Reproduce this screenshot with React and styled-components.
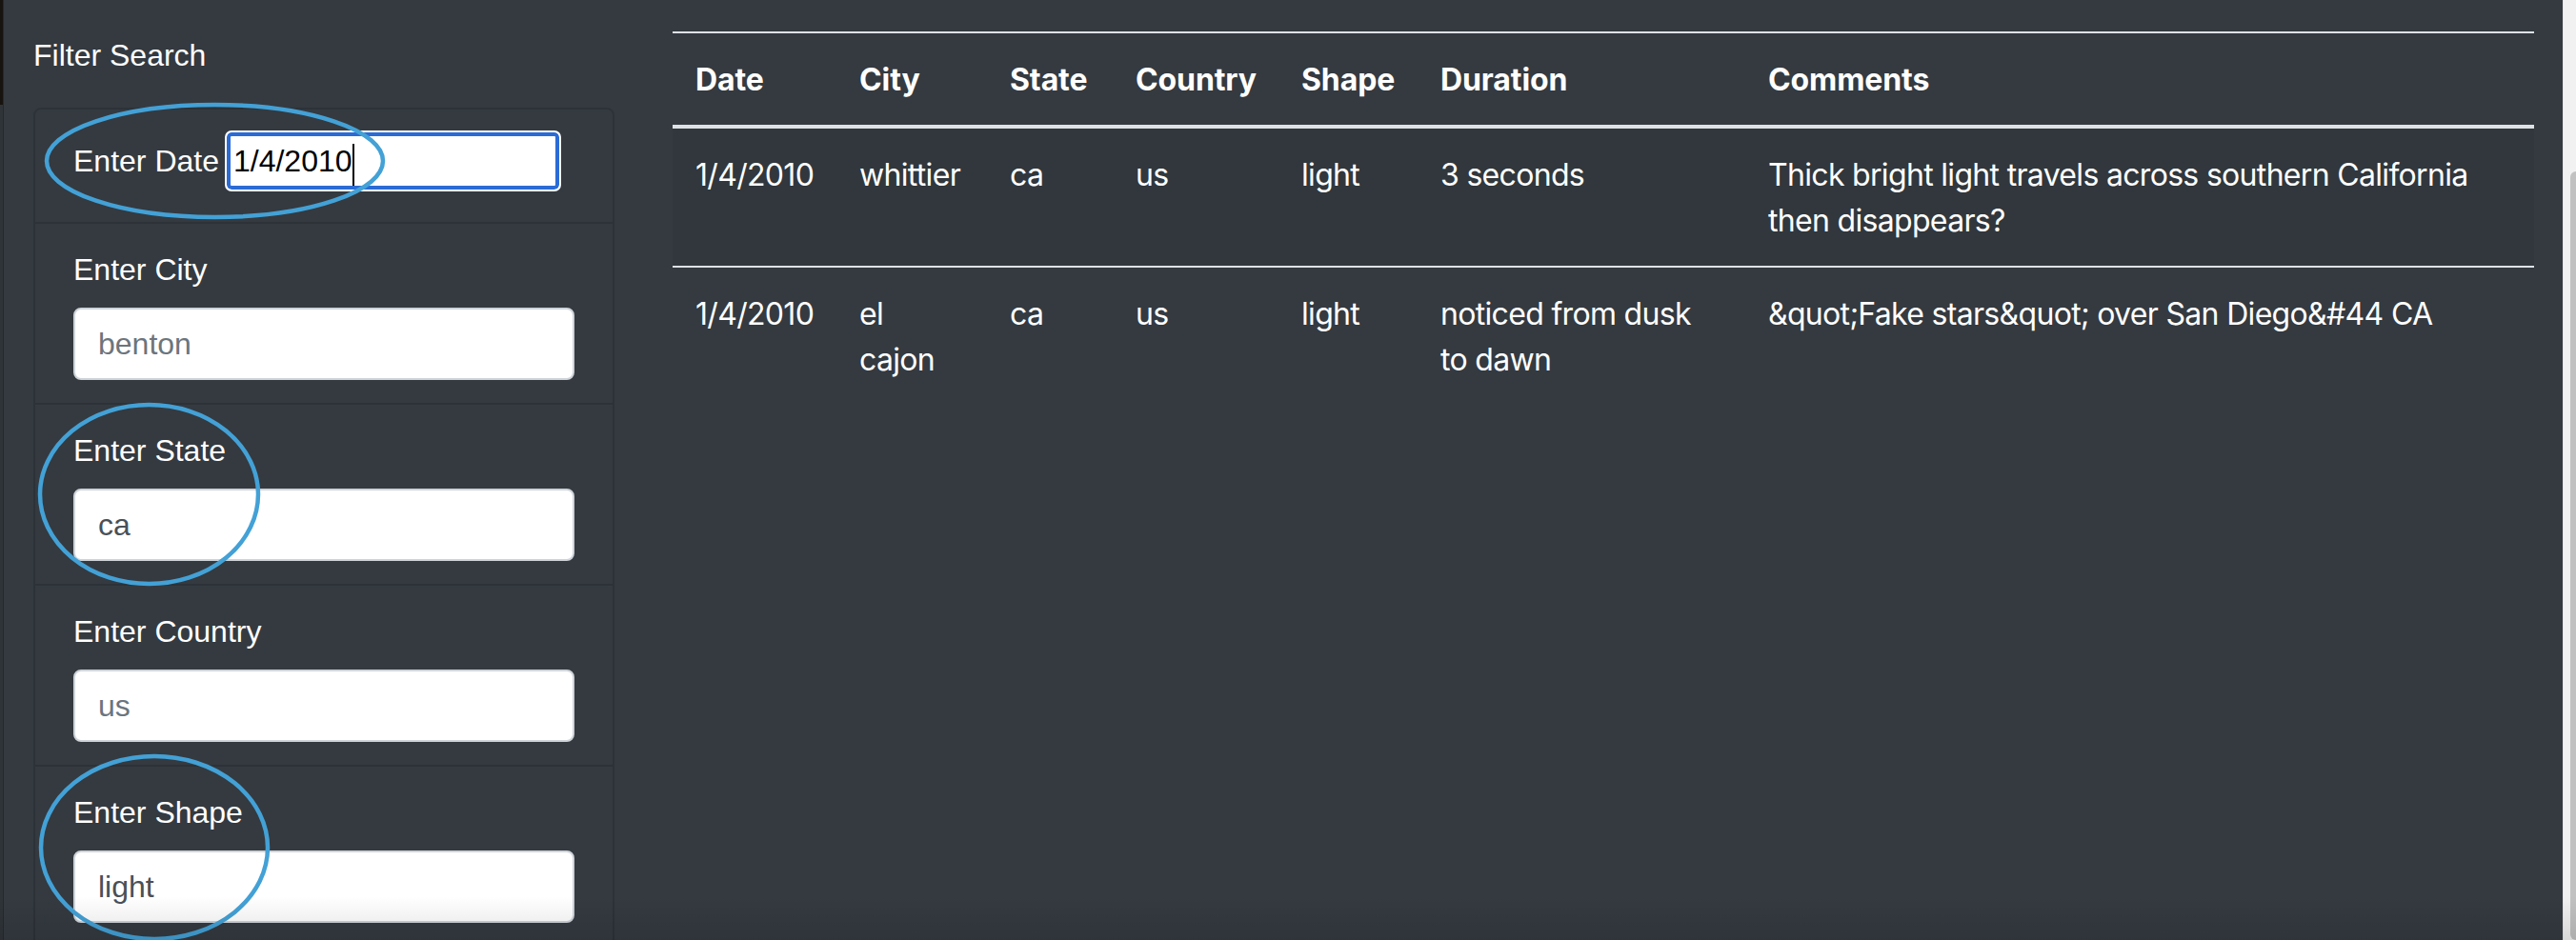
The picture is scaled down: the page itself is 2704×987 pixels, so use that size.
import React from "react";
import styled, { createGlobalStyle, css } from "styled-components";

const GlobalStyle = createGlobalStyle`
  html, body { margin: 0; padding: 0; background: #343a40; overflow: hidden; }
  #root { height: 100vh; }
  *, *::before, *::after { box-sizing: border-box; }
`;

const Window = styled.div`
  position: relative;
  display: flex;
  height: 987px;
  overflow: hidden;
  background: #343a40;
  color: #fff;
`;

const LeftEdge = styled.div`
  width: 4px;
  flex: none;
  display: flex;
  flex-direction: column;
  background: #2f3439;
  border-right: 1px solid #25292d;
`;

const EdgeTop = styled.div`
  height: 110px;
  background: #17130f;
`;

const Main = styled.main`
  flex: 1;
  min-width: 0;
  display: flex;
  align-items: flex-start;
  padding: 0 30px 0 31px;
`;

const Sidebar = styled.aside`
  width: 610px;
  flex: none;
  padding-top: 34px;
  font-family: "Liberation Sans", Arial, sans-serif;
`;

const SidebarTitle = styled.h2`
  margin: 0 0 31px;
  font-size: 32px;
  line-height: 48px;
  font-weight: 400;
  color: #fff;
`;

const FilterList = styled.ul`
  list-style: none;
  margin: 0;
  padding: 0;
  border: 2px solid rgba(0, 0, 0, 0.125);
  border-radius: 8px;
`;

const FilterItem = styled.li`
  padding: 24px 40px;
  & + & {
    border-top: 2px solid rgba(0, 0, 0, 0.125);
  }
  ${(p) =>
    p.$inline &&
    css`
      display: flex;
      align-items: center;
      padding: 22px 40px 32px;
    `}
`;

const FieldLabel = styled.label`
  display: block;
  margin: 0 0 16px;
  font-size: 32px;
  line-height: 48px;
  color: #fff;
  ${(p) =>
    p.$inline &&
    css`
      display: inline-block;
      margin: 0 6px 0 0;
    `}
`;

const TextInput = styled.input`
  display: block;
  width: 100%;
  height: 76px;
  margin: 0;
  padding: 12px 24px;
  font: 400 32px/48px "Liberation Sans", Arial, sans-serif;
  color: #495057;
  background: #fff;
  border: 2px solid #ced4da;
  border-radius: 8px;
  outline: none;
  &::placeholder {
    color: #6c757d;
    opacity: 1;
  }
`;

const DateBox = styled.span`
  position: relative;
  display: inline-flex;
`;

const DateInput = styled.input`
  width: 353px;
  height: 64px;
  margin: 0;
  padding: 0 0 0 7px;
  border: 2px solid #fff;
  border-radius: 7px;
  box-shadow: inset 0 0 0 4px #2b6bd5;
  background: #fff;
  color: #000;
  font: 400 32px "Liberation Sans", Arial, sans-serif;
  outline: none;
`;

const Caret = styled.span`
  position: absolute;
  left: 134px;
  top: 14px;
  width: 2px;
  height: 44px;
  background: #000;
`;

const TableArea = styled.section`
  flex: 1;
  min-width: 0;
  margin-left: 61px;
  padding-top: 33px;
`;

const Table = styled.table`
  width: 100%;
  table-layout: fixed;
  border-collapse: separate;
  border-spacing: 0;
  font-family: Inter, "Liberation Sans", Arial, sans-serif;
  font-size: 32px;
  line-height: 48px;
  color: #fff;
`;

const Th = styled.th`
  width: ${(p) => p.$w || "auto"};
  text-align: left;
  font-weight: 700;
  padding: 25px 24px 23px;
  vertical-align: bottom;
  letter-spacing: -0.1px;
  border-top: 2px solid #dee2e6;
  border-bottom: 4px solid #dee2e6;
`;

const Tr = styled.tr`
  background: ${(p) => (p.$striped ? "rgba(0, 0, 0, 0.05)" : "transparent")};
`;

const Td = styled.td`
  padding: 25px 24px 23px;
  vertical-align: top;
  font-weight: 400;
  letter-spacing: -0.68px;
  border-top: ${(p) => (p.$first ? "none" : "2px solid #dee2e6")};
`;

const ScrollTrack = styled.div`
  width: 14px;
  flex: none;
  display: flex;
  flex-direction: column;
  padding: 180px 0 0 7px;
  background: #f1f1f1;
  border-left: 1px solid #e4e4e4;
`;

const ScrollThumb = styled.div`
  flex: 1;
  background: #c1c1c1;
  border-radius: 6px 0 0 6px;
`;

const Annotations = styled.svg`
  position: absolute;
  inset: 0;
  width: 100%;
  height: 100%;
  pointer-events: none;
`;

const BottomShade = styled.div`
  position: absolute;
  left: 0;
  right: 0;
  bottom: 0;
  height: 46px;
  background: linear-gradient(to bottom, rgba(0, 0, 0, 0), rgba(0, 0, 0, 0.1));
  pointer-events: none;
`;

const columns = [
  { key: "date", label: "Date", w: "172px" },
  { key: "city", label: "City", w: "158px" },
  { key: "state", label: "State", w: "132px" },
  { key: "country", label: "Country", w: "174px" },
  { key: "shape", label: "Shape", w: "146px" },
  { key: "duration", label: "Duration", w: "344px" },
  { key: "comments", label: "Comments" },
];

const rows = [
  {
    date: "1/4/2010",
    city: "whittier",
    state: "ca",
    country: "us",
    shape: "light",
    duration: "3 seconds",
    comments: "Thick bright light travels across southern California then disappears?",
  },
  {
    date: "1/4/2010",
    city: "el cajon",
    state: "ca",
    country: "us",
    shape: "light",
    duration: "noticed from dusk to dawn",
    comments: "&quot;Fake stars&quot; over San Diego&#44 CA",
  },
];

const fields = [
  { id: "city", label: "Enter City", placeholder: "benton" },
  { id: "state", label: "Enter State", value: "ca" },
  { id: "country", label: "Enter Country", placeholder: "us" },
  { id: "shape", label: "Enter Shape", value: "light" },
];

export default function App() {
  return (
    <>
      <GlobalStyle />
      <Window>
        <LeftEdge>
          <EdgeTop />
        </LeftEdge>
        <Main>
          <Sidebar>
            <SidebarTitle>Filter Search</SidebarTitle>
            <FilterList>
              <FilterItem $inline>
                <FieldLabel $inline htmlFor="datetime">
                  Enter Date
                </FieldLabel>
                <DateBox>
                  <DateInput id="datetime" type="text" defaultValue="1/4/2010" readOnly />
                  <Caret />
                </DateBox>
              </FilterItem>
              {fields.map((f) => (
                <FilterItem key={f.id}>
                  <FieldLabel htmlFor={f.id}>{f.label}</FieldLabel>
                  <TextInput
                    id={f.id}
                    type="text"
                    placeholder={f.placeholder}
                    defaultValue={f.value}
                    readOnly
                  />
                </FilterItem>
              ))}
            </FilterList>
          </Sidebar>
          <TableArea>
            <Table>
              <thead>
                <tr>
                  {columns.map((c) => (
                    <Th key={c.key} $w={c.w}>
                      {c.label}
                    </Th>
                  ))}
                </tr>
              </thead>
              <tbody>
                {rows.map((r, i) => (
                  <Tr key={i} $striped={i % 2 === 0}>
                    {columns.map((c) => (
                      <Td key={c.key} $first={i === 0}>
                        {r[c.key]}
                      </Td>
                    ))}
                  </Tr>
                ))}
              </tbody>
            </Table>
          </TableArea>
        </Main>
        <ScrollTrack>
          <ScrollThumb />
        </ScrollTrack>
        <Annotations viewBox="0 0 2704 987" preserveAspectRatio="none">
          <g fill="none" stroke="#43a1d6" strokeWidth="4.5">
            <ellipse cx="225.5" cy="169" rx="176.5" ry="59" />
            <ellipse cx="156.5" cy="519" rx="114.5" ry="94" />
            <ellipse cx="162" cy="890" rx="119" ry="96" />
          </g>
        </Annotations>
        <BottomShade />
      </Window>
    </>
  );
}
